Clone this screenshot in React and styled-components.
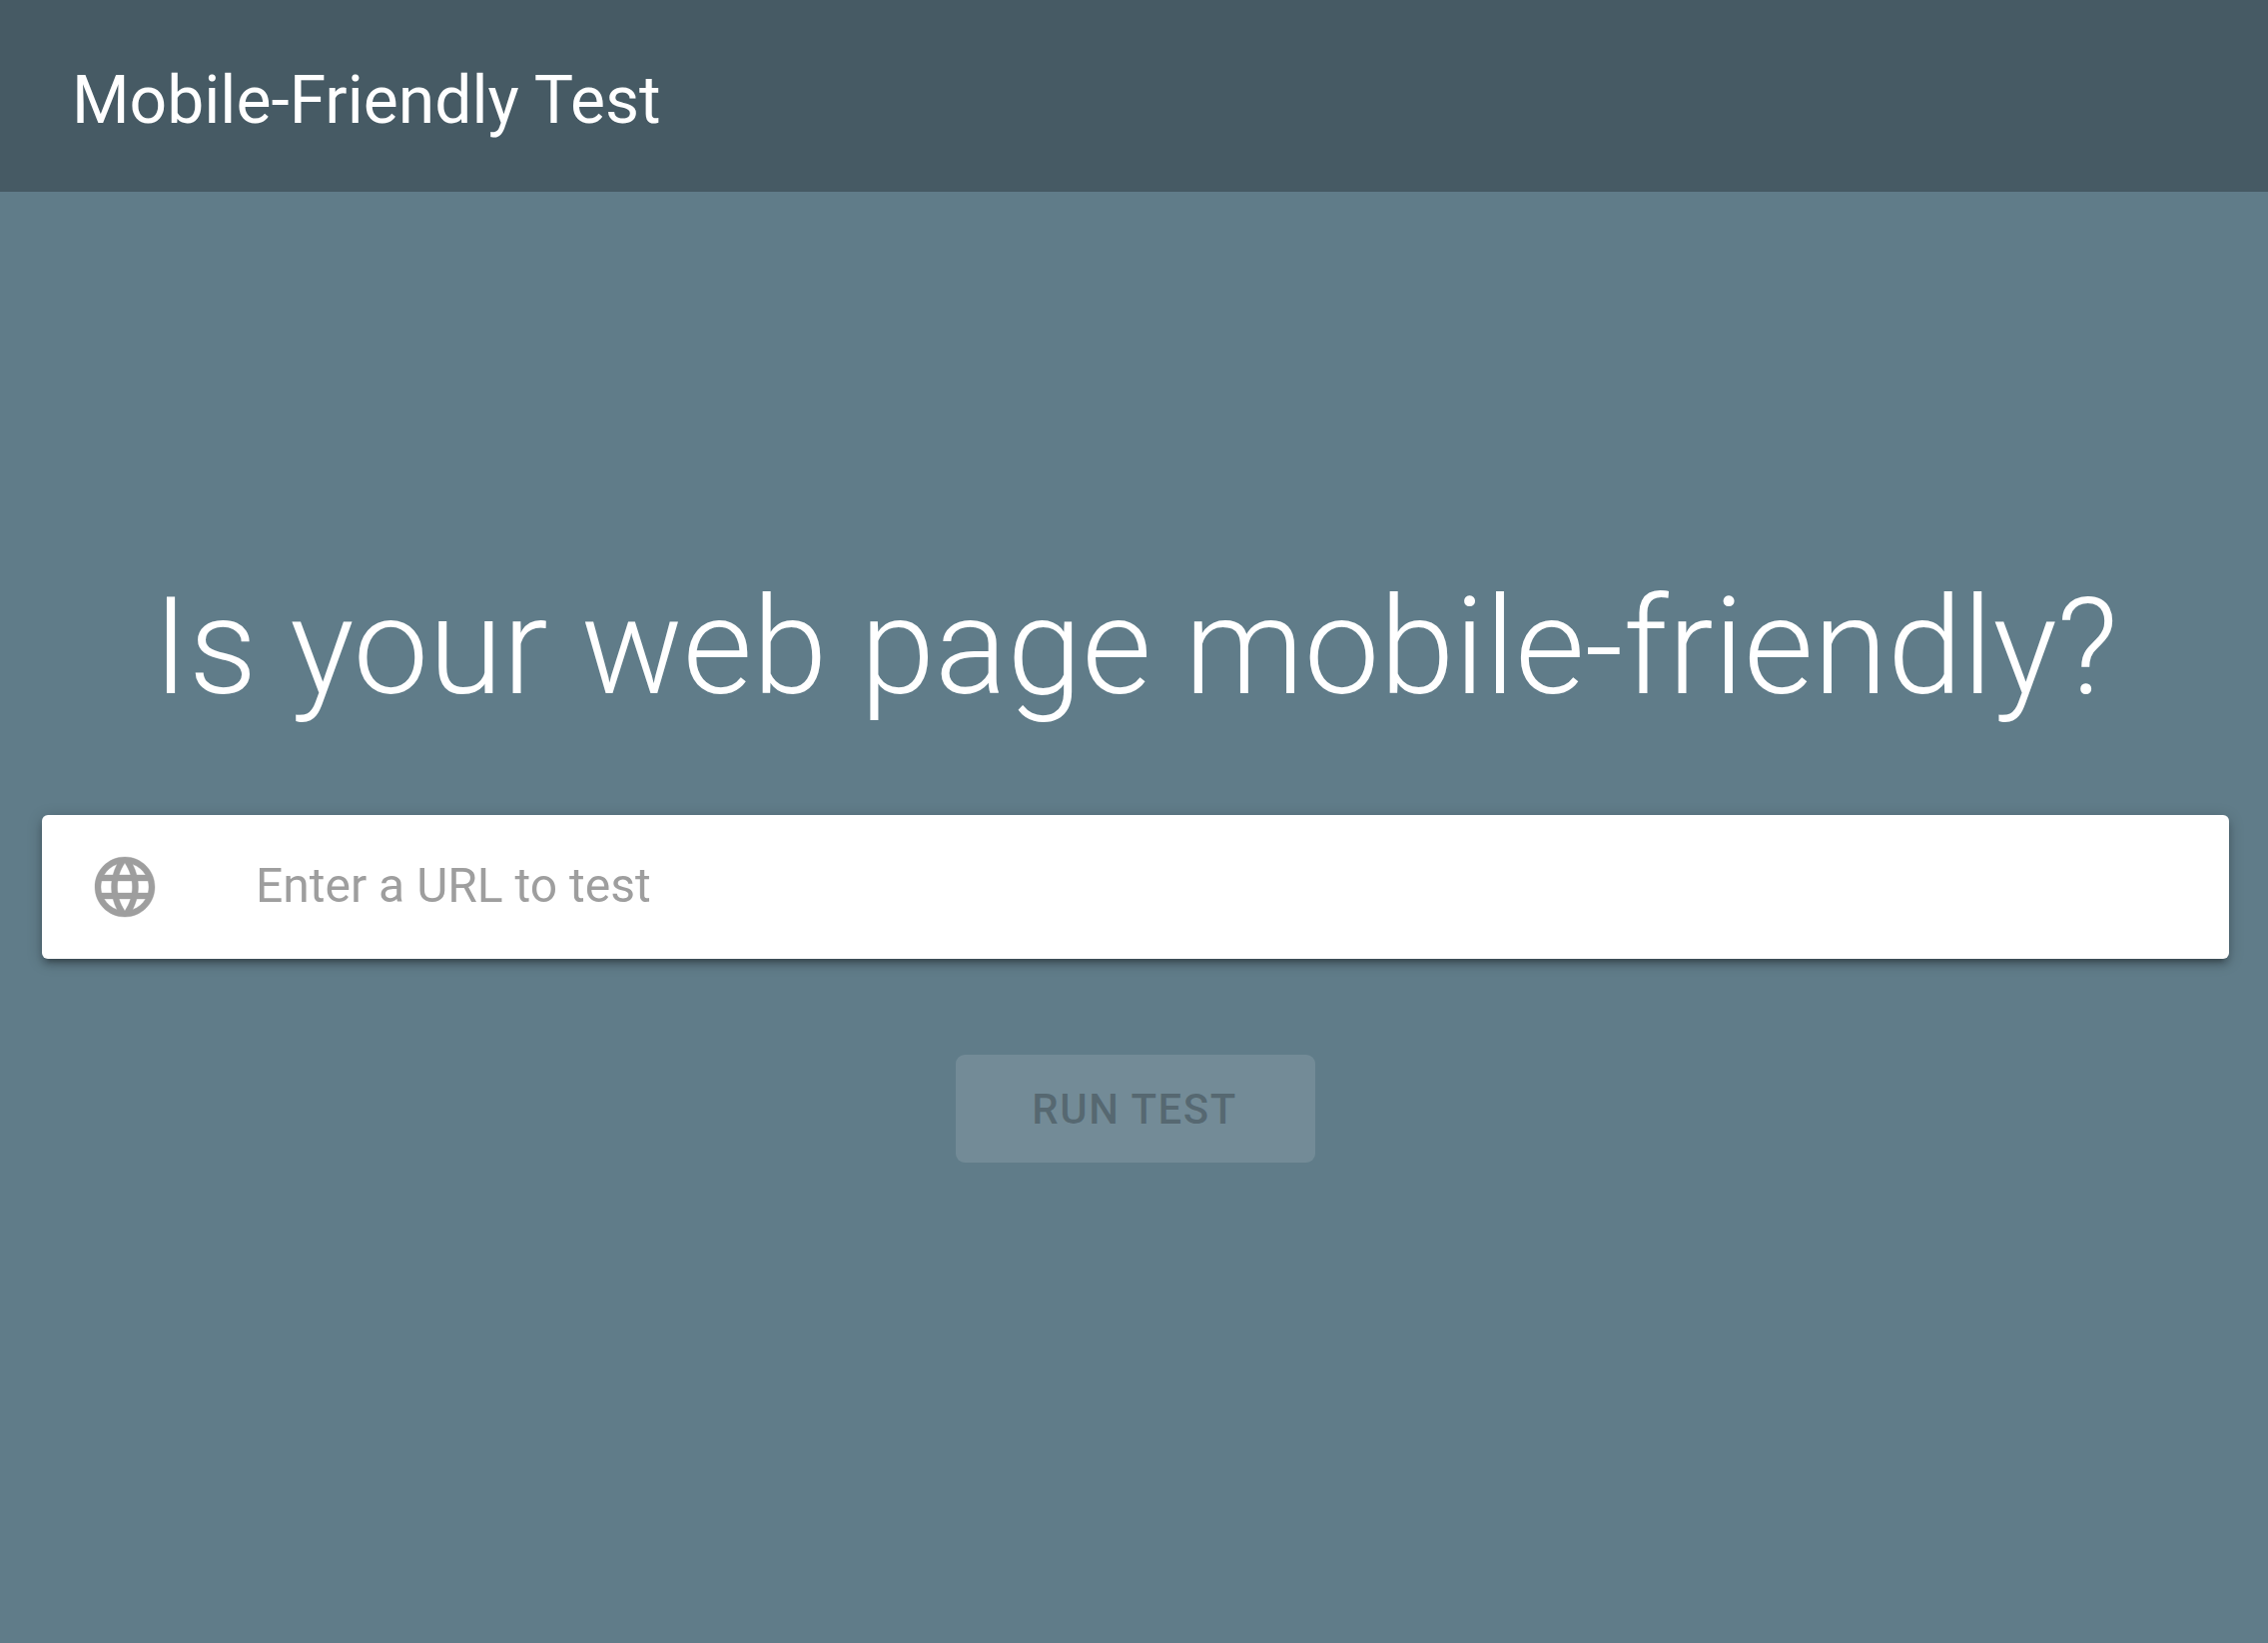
import React from "react";
import styled, { createGlobalStyle } from "styled-components";

const GlobalStyle = createGlobalStyle`
  html, body {
    margin: 0;
    padding: 0;
    background: #607c89;
  }
  * {
    box-sizing: border-box;
  }
`;

const Page = styled.div`
  width: 100%;
  min-height: 1645px;
  background: #607c89;
  font-family: Roboto, "Liberation Sans", sans-serif;
`;

const Header = styled.header`
  height: 192px;
  background: #465a64;
  display: flex;
  align-items: center;
  padding: 8px 0 0 72px;
`;

const Title = styled.h1`
  margin: 0;
  color: #fff;
  font-size: 66px;
  font-weight: 400;
`;

const Main = styled.main`
  display: flex;
  flex-direction: column;
  align-items: center;
  padding: 372px 39px 0 42px;
`;

const Headline = styled.h2`
  margin: 0 0 84px;
  color: #fff;
  font-size: 135px;
  line-height: 168px;
  font-weight: 300;
  text-align: center;
`;

const UrlBar = styled.div`
  width: 100%;
  height: 144px;
  background: #fff;
  border-radius: 6px;
  box-shadow: 0 6px 6px rgba(0, 0, 0, 0.16), 0 9px 3px -6px rgba(0, 0, 0, 0.14),
    0 3px 15px rgba(0, 0, 0, 0.22);
  display: flex;
  align-items: center;
  padding-left: 47px;
`;

const UrlInput = styled.input`
  flex: 1;
  border: none;
  outline: none;
  background: none;
  margin-left: 95px;
  padding: 0 0 3px;
  font-family: inherit;
  font-size: 48px;
  color: #212121;
  will-change: transform;

  &::placeholder {
    color: #9e9e9e;
    opacity: 1;
  }
`;

const RunButton = styled.button`
  width: 360px;
  height: 108px;
  margin-top: 96px;
  border: none;
  border-radius: 9px;
  padding: 0 2px 0 0;
  background: rgba(255, 255, 255, 0.12);
  color: rgba(0, 0, 0, 0.26);
  font-family: inherit;
  font-size: 42px;
  font-weight: 500;
  letter-spacing: 1.5px;
`;

const GlobeIcon = () => (
  <svg width="72" height="72" viewBox="0 0 24 24" fill="#9e9e9e" stroke="#9e9e9e" strokeWidth="0.12">
    <path d="M11.99 2C6.47 2 2 6.48 2 12s4.47 10 9.99 10C17.52 22 22 17.52 22 12S17.52 2 11.99 2zm6.93 6h-2.95c-.32-1.25-.78-2.45-1.38-3.56 1.84.63 3.37 1.91 4.33 3.56zM12 4.04c.83 1.2 1.48 2.53 1.91 3.96h-3.82c.43-1.43 1.08-2.76 1.91-3.96zM4.26 14C4.1 13.36 4 12.69 4 12s.1-1.36.26-2h3.38c-.08.66-.14 1.32-.14 2 0 .68.06 1.34.14 2H4.26zm.82 2h2.95c.32 1.25.78 2.45 1.38 3.56-1.84-.63-3.37-1.9-4.33-3.56zm2.95-8H5.08c.96-1.66 2.49-2.93 4.33-3.56C8.81 5.55 8.35 6.75 8.03 8zM12 19.96c-.83-1.2-1.48-2.53-1.91-3.96h3.82c-.43 1.43-1.08 2.76-1.91 3.96zM14.34 14H9.66c-.09-.66-.16-1.32-.16-2 0-.68.07-1.35.16-2h4.68c.09.65.16 1.32.16 2 0 .68-.07 1.34-.16 2zm.25 5.56c.6-1.11 1.06-2.31 1.38-3.56h2.95c-.96 1.65-2.49 2.93-4.33 3.56zM16.36 14c.08-.66.14-1.32.14-2 0-.68-.06-1.34-.14-2h3.38c.16.64.26 1.31.26 2s-.1 1.36-.26 2h-3.38z" />
  </svg>
);

const App = () => {
  return (
    <Page>
      <GlobalStyle />
      <Header>
        <Title>Mobile-Friendly Test</Title>
      </Header>
      <Main>
        <Headline>Is your web page mobile-friendly?</Headline>
        <UrlBar>
          <GlobeIcon />
          <UrlInput placeholder="Enter a URL to test" />
        </UrlBar>
        <RunButton disabled>RUN TEST</RunButton>
      </Main>
    </Page>
  );
};

export default App;
